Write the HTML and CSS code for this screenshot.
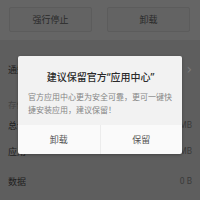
FILE: index.html
```html
<!DOCTYPE html>
<html lang="zh">
<head>
<meta charset="utf-8">
<link rel="stylesheet" href="styles.css">
</head>
<body>
<div class="page">
  <div class="top">
    <div class="btn">强行停止</div>
    <div class="btn">卸载</div>
  </div>
  <div class="list">
    <div class="row r1"><span class="lbl">通知管理</span><span class="chev">›</span></div>
    <div class="row sec"><span class="lbl">存储</span></div>
    <div class="row r3"><span class="lbl">总计</span><span class="val">12.5 MB</span></div>
    <div class="row r4"><span class="lbl">应用</span><span class="val">12.5 MB</span></div>
    <div class="row r5"><span class="lbl">数据</span><span class="val">0 B</span></div>
  </div>
  <div class="dialog">
    <div class="content">
      <div class="title">建议保留官方<span class="q">“</span>应用中心<span class="q">”</span></div>
      <div class="body">官方应用中心更为安全可靠，更可一键快<br>捷安装应用，建议保留！</div>
    </div>
    <div class="actions">
      <div class="act">卸载</div>
      <div class="act">保留</div>
    </div>
  </div>
</div>
</body>
</html>
```
FILE: styles.css
```css
html, body {
  margin: 0;
  padding: 0;
}
body {
  width: 200px;
  height: 200px;
  overflow: hidden;
  background: #5e5e5e;
  font-family: "Noto Sans CJK SC", "Noto Sans", sans-serif;
}
.page {
  position: relative;
  width: 200px;
  height: 200px;
}
.top {
  height: 40px;
  background: #656565;
  display: flex;
  gap: 15px;
  padding: 7px 10px 0 9px;
  box-sizing: border-box;
}
.btn {
  width: 83px;
  height: 25px;
  box-sizing: border-box;
  border: 1px solid #5c5c5c;
  border-radius: 2px;
  background: #636363;
  color: #2a2a2a;
  font-size: 9px;
  display: flex;
  align-items: center;
  justify-content: center;
}
.list {
  display: flex;
  flex-direction: column;
  padding: 0 8px;
}
.row {
  display: flex;
  justify-content: space-between;
  align-items: center;
  font-size: 9px;
  color: #202020;
}
.r1 { height: 20px; margin-top: 19px; }
.sec { height: 12px; margin-top: 19px; color: #444; font-size: 8.5px; }
.r3 { height: 14px; margin-top: 8px; }
.r4 { height: 14px; margin-top: 12px; }
.r5 { height: 14px; margin-top: 16px; }
.val {
  color: #3a3a3a;
  font-size: 8.5px;
  font-family: "Roboto", "Noto Sans", sans-serif;
}
.chev {
  color: #7a7a7a;
  font-size: 14px;
  font-family: "DejaVu Sans", sans-serif;
}
.dialog {
  position: absolute;
  left: 18px;
  top: 56px;
  width: 164px;
  height: 98px;
  border-radius: 2px;
  overflow: hidden;
  box-shadow: 0 1px 3px rgba(0,0,0,0.3);
  display: flex;
  flex-direction: column;
}
.content {
  background: #f2f2f2;
  height: 69px;
  padding: 14px 9px 0 10px;
  box-sizing: border-box;
}
.title {
  font-size: 10px;
  line-height: 14px;
  font-weight: 500;
  color: #2a2a2a;
  text-align: center;
}
.q {
  font-family: "Noto Sans", sans-serif;
}
.body {
  margin-top: 6px;
  font-size: 8px;
  line-height: 13px;
  color: #858585;
  white-space: nowrap;
}
.actions {
  flex: 1;
  display: flex;
  background: #fafafa;
}
.act {
  flex: 1;
  display: flex;
  align-items: center;
  justify-content: center;
  font-size: 9px;
  color: #555;
}
.act + .act {
  border-left: 1px solid #ececec;
}
```
